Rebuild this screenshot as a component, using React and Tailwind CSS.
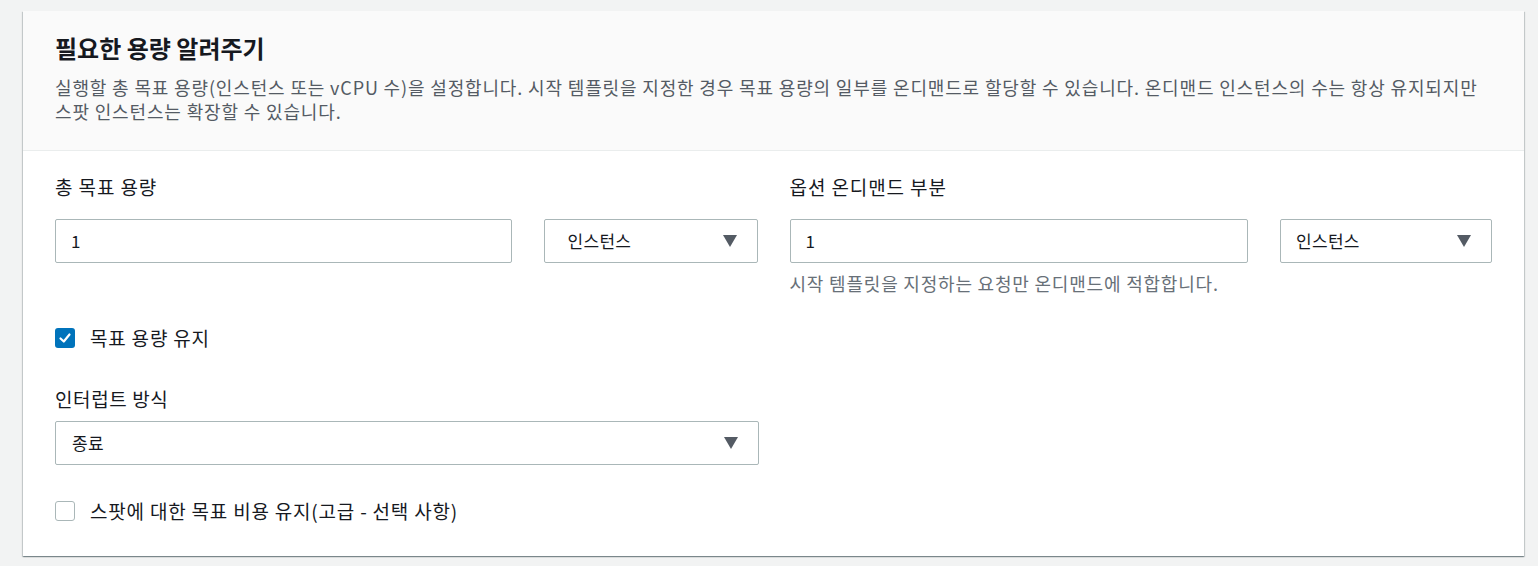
import React from "react";

const font = { fontFamily: '"Noto Sans CJK KR", "Noto Sans", sans-serif' };

function Caret() {
  return (
    <svg width="14" height="12" viewBox="0 0 14 12" className="shrink-0">
      <path d="M0 0 H14 L7 12 Z" fill="#545b64" />
    </svg>
  );
}

function TextInput({ value }) {
  return (
    <div className="flex h-[44px] flex-1 items-center rounded-[2px] border border-[#aab7b8] bg-white px-[15px] text-[17px] text-[#16191f]">
      {value}
    </div>
  );
}

function Select({ value, className }) {
  return (
    <div className={`flex h-[44px] items-center justify-between rounded-[2px] border border-[#aab7b8] bg-white pr-[20px] text-[17px] tracking-[0.3px] text-[#16191f] ${className}`}>
      <span>{value}</span>
      <Caret />
    </div>
  );
}

function Checkbox({ checked }) {
  if (checked) {
    return (
      <div className="flex h-[20px] w-[20px] shrink-0 items-center justify-center rounded-[3px] bg-[#0073bb]">
        <svg width="14" height="14" viewBox="0 0 14 14">
          <path d="M2.5 7.5 L5.8 10.5 L11.5 3.5" fill="none" stroke="white" strokeWidth="2.2" strokeLinecap="round" strokeLinejoin="round" />
        </svg>
      </div>
    );
  }
  return <div className="h-[20px] w-[20px] shrink-0 rounded-[3px] border border-[#aab7b8] bg-white" />;
}

export default function App() {
  return (
    <div className="min-h-[566px] bg-[#f2f3f3] pl-[23px] pr-[14px] pt-[11px]" style={font}>
      <div className="h-[545px] bg-white shadow-[0_1px_1px_0_rgba(0,28,36,0.3),1px_1px_1px_0_rgba(0,28,36,0.15),-1px_1px_1px_0_rgba(0,28,36,0.15)]">
        <div className="border-b border-[#eaeded] bg-[#fafafa] px-[32px] pb-[27px] pt-[22px]">
          <h2 className="text-[24px] font-bold leading-[30px] text-[#16191f]">필요한 용량 알려주기</h2>
          <p className="mt-[12px] whitespace-nowrap text-[18px] leading-[24px] tracking-[0.85px] text-[#545b64]">
            실행할 총 목표 용량(인스턴스 또는 vCPU 수)을 설정합니다. 시작 템플릿을 지정한 경우 목표 용량의 일부를 온디맨드로 할당할 수 있습니다. 온디맨드 인스턴스의 수는 항상 유지되지만
            <br />
            스팟 인스턴스는 확장할 수 있습니다.
          </p>
        </div>
        <div className="px-[32px] pt-[23px]">
          <div className="grid grid-cols-2 gap-x-[32px]">
            <div>
              <div className="text-[19px] leading-[26px] tracking-[0.9px] text-[#16191f]">총 목표 용량</div>
              <div className="mt-[19px] flex gap-[32px]">
                <TextInput value="1" />
                <Select value="인스턴스" className="w-[214px] pl-[23px]" />
              </div>
            </div>
            <div>
              <div className="text-[19px] leading-[26px] tracking-[0.9px] text-[#16191f]">옵션 온디맨드 부분</div>
              <div className="mt-[19px] flex gap-[32px]">
                <TextInput value="1" />
                <Select value="인스턴스" className="w-[212px] pl-[15px]" />
              </div>
              <div className="mt-[10px] text-[18px] leading-[20px] tracking-[0.8px] text-[#687078]">시작 템플릿을 지정하는 요청만 온디맨드에 적합합니다.</div>
            </div>
          </div>
          <div className="mt-[35px] flex items-center gap-[15px]">
            <Checkbox checked />
            <span className="text-[19px] leading-[20px] tracking-[0.8px] text-[#16191f]">목표 용량 유지</span>
          </div>
          <div className="w-[704px]">
            <div className="mt-[38px] text-[19px] leading-[26px] tracking-[0.6px] text-[#16191f]">인터럽트 방식</div>
            <Select value="종료" className="mt-[9px] w-full pl-[16px]" />
          </div>
          <div className="mt-[36px] flex items-center gap-[15px]">
            <Checkbox />
            <span className="text-[19px] leading-[20px] tracking-[0.8px] text-[#16191f]">스팟에 대한 목표 비용 유지(고급 - 선택 사항)</span>
          </div>
        </div>
      </div>
    </div>
  );
}
